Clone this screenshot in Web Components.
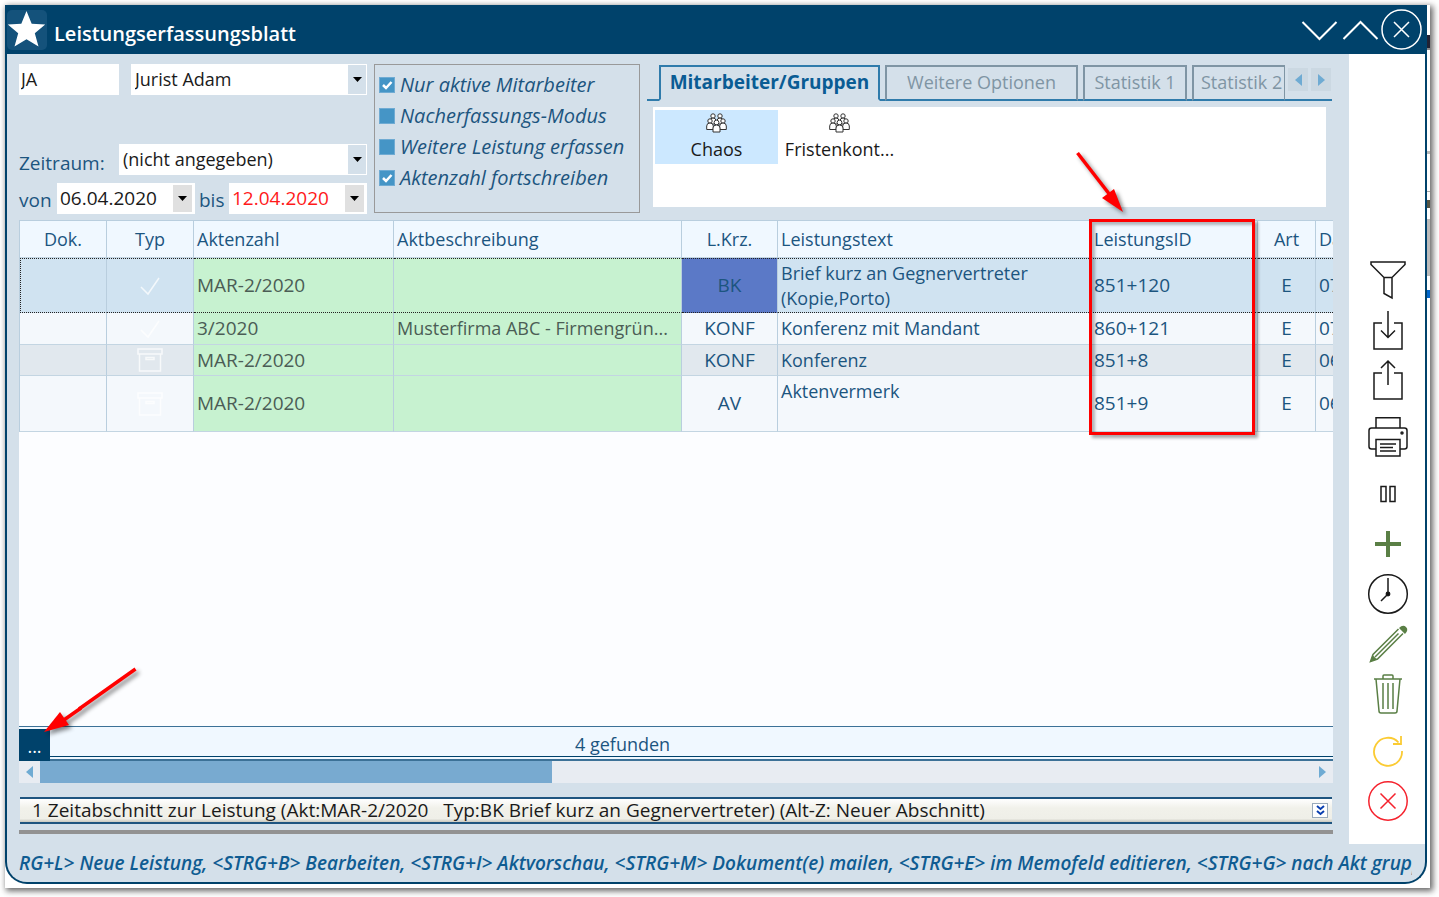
<!DOCTYPE html>
<html lang="de">
<head>
<meta charset="utf-8">
<title>Leistungserfassungsblatt</title>
<style>
  html, body { margin: 0; }
  body {
    --navy: #00426b; --pane: #d4e0ea; --ink: #1c557f; --line: #b9cede; --sky: #78aad0;
    display: flex; flex-direction: column; min-height: 100vh; box-sizing: border-box;
    padding: 5px 9px 9px 5px; background: #fff;
    font: 18px/25px "Open Sans", "Noto Sans", sans-serif; color: var(--ink);
  }
</style>
</head>
<body>
<app-window>
  <title-bar slot="title">Leistungserfassungsblatt</title-bar>
  <filter-form slot="top"></filter-form>
  <option-group slot="top">
    <check-option checked label="Nur aktive Mitarbeiter"></check-option>
    <check-option label="Nacherfassungs-Modus"></check-option>
    <check-option label="Weitere Leistung erfassen"></check-option>
    <check-option checked label="Aktenzahl fortschreiben"></check-option>
  </option-group>
  <tab-panel slot="top">
    <group-item selected>Chaos</group-item>
    <group-item>Fristenkont...</group-item>
  </tab-panel>
  <service-table slot="main"></service-table>
  <status-row slot="main">4 gefunden</status-row>
  <scroll-strip slot="main"></scroll-strip>
  <section-bar slot="main">1 Zeitabschnitt zur Leistung (Akt:MAR-2/2020 &nbsp; Typ:BK Brief kurz an Gegnervertreter) (Alt-Z: Neuer Abschnitt)</section-bar>
  <tool-rail slot="rail"></tool-rail>
  <hint-line slot="hints">RG+L&gt; Neue Leistung, &lt;STRG+B&gt; Bearbeiten, &lt;STRG+I&gt; Aktvorschau, &lt;STRG+M&gt; Dokument(e) mailen, &lt;STRG+E&gt; im Memofeld editieren, &lt;STRG+G&gt; nach Akt gruppie</hint-line>
</app-window>

<script>
const define = (name, html, setup) => {
  const tpl = document.createElement('template');
  tpl.innerHTML = '<style>:host,*{box-sizing:border-box}button,input,select{font:inherit;color:inherit;margin:0;padding:0;border:0;border-radius:0;background:none}svg{display:block}</style>' + html;
  customElements.define(name, class extends HTMLElement {
    constructor() {
      super();
      this.attachShadow({ mode: 'open' }).append(tpl.content.cloneNode(true));
    }
    connectedCallback() { if (setup) setup(this, this.shadowRoot); }
  });
};

define('app-window', `
<style>
  :host { flex: 1; display: flex; background: #fff; box-shadow: 2px 2px 6px 1px #0009; padding: 0 3px 4px 0; position: relative; }
  .behind { position: absolute; right: 0; top: 0; bottom: 0; width: 3px;
    background: linear-gradient(#fff 30px, #223 30px 43px, #888 43px 45px, #fff 45px 146px, #bbb 146px 149px, #fff 149px 186px, #aaa 186px 187px, #fff 187px 195px, #554 195px 203px, #fff 203px 214px, #bbb 214px 271px, #fff 271px 285px, #06c 285px 293px, #fff 293px); }
  .win { flex: 1; min-width: 0; display: flex; flex-direction: column; background: var(--pane);
    border: 2px solid var(--navy); border-top: 0; border-radius: 0 0 22px 22px; overflow: hidden; position: relative; }
  .mid { flex: 1; display: flex; }
  main { flex: 1; min-width: 0; display: flex; flex-direction: column; padding: 10px 16px 10px 12px; }
  .top { display: flex; gap: 7px; height: 156px; align-items: flex-start; }
</style>
<div class="behind"></div>
<div class="win">
  <slot name="title"></slot>
  <div class="mid">
    <main><div class="top"><slot name="top"></slot></div><slot name="main"></slot></main>
    <slot name="rail"></slot>
  </div>
  <slot name="hints"></slot>
</div>`);

define('title-bar', `
<style>
  :host { display: flex; align-items: center; height: 49px; background: var(--navy); color: #fff; padding-right: 3px; }
  .logo { width: 40px; height: 40px; border-radius: 5px; background: #14527b; }
  h1 { flex: 1; margin: 0; padding: 8px 0 0 7px; font-size: 20px; line-height: 25px; font-weight: 600; }
  button { height: 41px; display: grid; place-items: center; }
  svg { fill: none; stroke: #fff; stroke-width: 2; }
  .logo svg { fill: #fff; stroke: none; }
</style>
<span class="logo"><svg width="40" height="40" viewBox="0 0 40 40"><path d="M19.500 1l5.200 12.700 13.500.8-10.400 8.800 3.700 13.200-12-7.300-12 7.300 3.700-13.200L.8 14.500l13.500-.8z"/></svg></span>
<h1><slot></slot></h1>
<button aria-label="Minimieren"><svg width="41" height="41"><path d="M3.500 13L20.500 30 37.500 13"/></svg></button>
<button aria-label="Maximieren"><svg width="41" height="41"><path d="M3.500 30L20.500 13 37.500 30"/></svg></button>
<button aria-label="Schließen"><svg width="41" height="41"><circle cx="20.500" cy="20.500" r="19.500" stroke-width="1.500"/><path d="M13 13l15 15M28 13L13 28" stroke-width="1.500"/></svg></button>`);

define('filter-form', `
<style>
  :host { display: block; width: 348px; flex: none; }
  form { display: flex; flex-direction: column; }
  .row { display: flex; height: 31px; }
  .row + .row { margin-top: 49px; }
  .row + .dates { margin-top: 8px; font-size: 19px; }
  label { padding-top: 7px; line-height: 25px; font-size: 19px; }
  .id { width: 100px; margin-right: 12px; background: #fff; color: #1a1a1a; padding: 0 2px; }
  .period { width: 100px; }
</style>
<form>
  <div class="row"><input class="id" value="JA" aria-label="Kürzel"><combo-field name="Mitarbeiter" value="Jurist Adam"></combo-field></div>
  <div class="row"><label class="period">Zeitraum:</label><combo-field name="Zeitraum" value="(nicht angegeben)"></combo-field></div>
  <div class="row dates"><date-field label="von" value="06.04.2020"></date-field><date-field label="bis" value="12.04.2020" class="end" style="--date-ink:#ff1a1a"></date-field></div>
</form>`);

define('combo-field', `
<style>
  :host { display: flex; flex: 1; position: relative; background: #fff; color: #1a1a1a; }
  select { appearance: none; width: 100%; height: 31px; padding: 0 22px 0 4px; outline: 0; }
  span { position: absolute; right: 1px; top: 1px; bottom: 1px; width: 18px; background: var(--pane); display: grid; place-items: center; pointer-events: none; }
</style>
<select></select><span><svg width="9" height="5"><path d="M0 0h9L4.500 5z"/></svg></span>`,
(el, root) => {
  const s = root.querySelector('select');
  s.setAttribute('aria-label', el.getAttribute('name'));
  s.add(new Option(el.getAttribute('value')));
});

define('date-field', `
<style>
  :host { display: flex; }
  :host(.end) { margin-left: 4px; }
  label { width: 38px; padding-top: 5px; }
  :host(.end) label { width: 30px; }
  div { display: flex; width: 138px; height: 31px; background: #fff; padding: 2px 3px 2px 3px; color: var(--date-ink, #1a1a1a); }
  input { flex: 1; min-width: 0; }
  button { width: 19px; background: #e0e0e0; color: #000; display: grid; place-items: center; }
</style>
<label for="d"></label><div><input id="d"><button type="button" aria-label="Kalender"><svg width="9" height="5"><path d="M0 0h9L4.500 5z"/></svg></button></div>`,
(el, root) => {
  root.querySelector('label').textContent = el.getAttribute('label');
  root.querySelector('input').value = el.getAttribute('value');
});

define('option-group', `
<style>
  :host { display: block; flex: none; width: 266px; height: 149px; border: 1px solid #999; padding: 4px 0 0 4px; }
</style><slot></slot>`);

define('check-option', `
<style>
  :host { display: block; height: 31px; font-style: italic; font-size: 20px; }
  label { display: flex; align-items: center; gap: 5px; height: 31px; white-space: nowrap; }
  input { appearance: none; width: 16px; height: 16px; background: #4595c6; border: 1px solid #6fabd3; }
  .box { position: relative; display: grid; }
  svg { position: absolute; left: 3px; top: 4px; fill: none; stroke: #fff; stroke-width: 2.500; display: none; pointer-events: none; }
  input:checked + svg { display: block; }
</style>
<label><span class="box"><input type="checkbox"><svg width="11" height="9"><path d="M1 4l3 3 5.500-6"/></svg></span><span class="text"></span></label>`,
(el, root) => {
  root.querySelector('.text').textContent = el.getAttribute('label');
  root.querySelector('input').checked = el.hasAttribute('checked');
});

define('tab-panel', `
<style>
  :host { display: block; flex: 1; min-width: 0; }
  .tabs { display: flex; height: 37px; padding: 1px 0 0 12px; background: linear-gradient(#2f7bab, #2f7bab) 0 100% / 100% 2px no-repeat; margin-right: 1px; }
  .tabs button { flex: none; height: 36px; border: 1px solid #7f95a4; border-width: 2px 2px 0; color: #7f95a4; margin-right: 5px; text-align: center; white-space: nowrap; overflow: hidden; padding-bottom: 2px; border-bottom: 2px solid #2f7bab; }
  .tabs button.on { border-color: #2f7bab; border-bottom-color: var(--pane); color: #0a5c94; font-weight: 700; font-size: 19px; }
  .a { width: 221px; } .b { width: 193px; } .c { width: 104px; } .d { width: 93px; }
  .tabs .d { text-align: left; padding-left: 7px; margin-right: 3px; border-right-width: 1px; }
  .tabs .nav { width: 20px; height: 23px; margin: 3px 3px 0 0; padding: 0; border: 0; background: #cbd8e2; display: grid; place-items: center; }
  svg { fill: #6fabd3; }
  .panel { display: flex; align-items: flex-start; height: 100px; background: #fff; margin: 6px 7px 0 6px; padding: 3px 2px; }
</style>
<div class="tabs" role="tablist">
  <button class="a on" role="tab">Mitarbeiter/Gruppen</button><button class="b" role="tab">Weitere Optionen</button><button class="c" role="tab">Statistik 1</button><button class="d" role="tab">Statistik 2</button><button class="nav" aria-label="Zurück"><svg width="7" height="12"><path d="M7 0v12L0 6z"/></svg></button><button class="nav" aria-label="Weiter"><svg width="7" height="12"><path d="M0 0v12l7-6z"/></svg></button>
</div>
<div class="panel"><slot></slot></div>`);

define('group-item', `
<style>
  :host { display: flex; flex-direction: column; align-items: center; width: 123px; height: 54px; padding-top: 3px; color: #1a1a1a; white-space: nowrap; }
  :host([selected]) { background: #cce8ff; }
  svg { fill: #fff; stroke: #333; stroke-width: 1; margin-bottom: 4px; }
  div { line-height: 25px; }
</style>
<svg width="21" height="20" viewBox="0 0 21 20"><g><circle cx="7" cy="3" r="2.200"/><path d="M4 11V8q0-3 3-3t3 3v3z"/><circle cx="14" cy="3" r="2.200"/><path d="M11 11V8q0-3 3-3t3 3v3z"/><circle cx="4" cy="8" r="2.200"/><path d="M.7 16.500V13q0-3 3.300-3t3.300 3v3.500z"/><circle cx="17" cy="8" r="2.200"/><path d="M13.700 16.500V13q0-3 3.300-3t3.300 3v3.500z"/><circle cx="10.500" cy="9.500" r="2.400"/><path d="M7 19v-4q0-3 3.500-3t3.500 3v4z"/></g></svg>
<div><slot></slot></div>`);

const tick = '<svg width="22" height="20"><path d="M2 11l7 7L20 2"/></svg>';
const box = '<svg width="26" height="24"><path d="M1 1h24v5H1zM2.500 6h21v17h-21zM9 9.500h8v2H9z"/></svg>';
const rows = [
  ['sel', tick, 'MAR-2/2020', '', 'BK', 'Brief kurz an Gegnervertreter (Kopie,Porto)', '851+120', 'E', '07.04.2020'],
  ['', tick, '3/2020', 'Musterfirma ABC - Firmengrün...', 'KONF', 'Konferenz mit Mandant', '860+121', 'E', '07.04.2020'],
  ['alt', box, 'MAR-2/2020', '', 'KONF', 'Konferenz', '851+8', 'E', '06.04.2020'],
  ['tall', box, 'MAR-2/2020', '', 'AV', 'Aktenvermerk', '851+9', 'E', '06.04.2020'],
];
define('service-table', `
<style>
  :host { display: block; flex: 1; position: relative; background: #fcfdff; min-height: 300px; }
  .clip { overflow: hidden; }
  table { table-layout: fixed; width: 100%; border-collapse: separate; border-spacing: 0; border-left: 1px solid var(--line); }
  th, td { height: 32px; padding: 0 3px; border-right: 1px solid var(--line); border-bottom: 1px solid #c3d5e2; font-weight: 400; text-align: left; white-space: nowrap; overflow: hidden; background: #f4f8fc; }
  th { height: 38px; background: #f0f8ff; border-top: 1px solid var(--line); }
  tr > :last-child { border-right: 0; }
  .c { text-align: center; }
  .n { font-size: 19px; }
  .g { background: #c7f2d0; color: #4b5d55; text-overflow: ellipsis; }
  .alt td { height: 31px; }
  .alt td:not(.g) { background: #e1e8ee; }
  .sel td { height: 55px; border-top: 1px dotted #222; border-bottom: 1px dotted #222; }
  .sel td:not(.g) { background: #d0e3f1; }
  .sel td.k { background: #5b79c7; }
  .sel td:first-child { border-left: 1px dotted #222; }
  .t { white-space: normal; }
  .tall td { height: 56px; }
  .tall .t { vertical-align: top; padding-top: 3px; }
  td svg { margin: auto; fill: none; stroke: #fff; stroke-width: 1.500; opacity: .75; }
  .mark { position: absolute; left: 1070px; top: -1px; width: 166px; height: 216px; border: 3px solid #f00; box-shadow: 3px 3px 3px #0005, inset 3px 3px 3px #0004; pointer-events: none; }
  .arrow { position: absolute; left: 1050px; top: -75px; filter: drop-shadow(3px 3px 2px #0007); pointer-events: none; }
</style>
<div class="clip"><table>
<colgroup><col style="width:87px"><col style="width:87px"><col style="width:200px"><col style="width:288px"><col style="width:96px"><col style="width:313px"><col style="width:167px"><col style="width:58px"><col></colgroup>
<thead><tr><th class="c">Dok.</th><th class="c">Typ</th><th>Aktenzahl</th><th>Aktbeschreibung</th><th class="c">L.Krz.</th><th>Leistungstext</th><th>LeistungsID</th><th class="c">Art</th><th>Datum</th></tr></thead>
<tbody>${rows.map(r => `<tr class="${r[0]}"><td></td><td class="c">${r[1]}</td><td class="g n">${r[2]}</td><td class="g">${r[3]}</td><td class="c k n">${r[4]}</td><td class="t">${r[5]}</td><td class="n">${r[6]}</td><td class="c n">${r[7]}</td><td class="n">${r[8]}</td></tr>`).join('')}</tbody>
</table></div>
<div class="mark"></div>
<svg class="arrow" width="60" height="70"><path d="M8.500 8L41 50" stroke="#f00" stroke-width="3.500"/><path d="M54 67L33 53l12-9z" fill="#f00"/></svg>`);

define('status-row', `
<style>
  :host { display: flex; position: relative; height: 35px; background: #f0f8ff; border-top: 1px solid #3c7197; border-bottom: 2px solid #3c7197; }
  button { width: 31px; height: 32px; margin-top: 2px; background: var(--navy); color: #fff; padding-top: 3px; line-height: 25px; }
  div { flex: 1; margin-bottom: 2px; border-bottom: 1px solid var(--navy); padding: 5px 0 0 525px; line-height: 25px; }
  svg { position: absolute; left: 22px; bottom: 26px; filter: drop-shadow(3px 3px 2px #0007); pointer-events: none; }
</style>
<button aria-label="Menü">...</button><div><slot></slot></div>
<svg width="100" height="70"><path d="M94.500 6L38 46" stroke="#f00" stroke-width="3.500"/><path d="M3 69L19 49l9 13z" fill="#f00"/><path d="M40 45L20 59" stroke="#f00" stroke-width="3.500"/></svg>`);

define('scroll-strip', `
<style>
  :host { display: flex; height: 22px; background: #e8ecf2; align-items: center; }
  button { width: 21px; height: 22px; display: grid; place-items: center; }
  .thumb { width: 39%; height: 22px; background: var(--sky); margin-right: auto; }
  svg { fill: #6fabd3; }
</style>
<button aria-label="Nach links"><svg width="7" height="12"><path d="M7 0v12L0 6z"/></svg></button><div class="thumb"></div><button aria-label="Nach rechts"><svg width="7" height="12"><path d="M0 0v12l7-6z"/></svg></button>`);

define('section-bar', `
<style>
  :host { display: block; margin-top: 14px; padding-bottom: 6px; border-bottom: 4px solid #929292; color: #1a1a1a; font-size: 19px; }
  .bar { display: flex; align-items: center; height: 27px; margin: 0 1px; padding: 0 4px 0 12px; border-top: 2px solid #1f5580; border-bottom: 2px solid #1f5580; background: linear-gradient(#fff, #f1f1ea 40%, #efefe8 85%, #c9c9c0); white-space: nowrap; }
  .txt { flex: 1; min-width: 0; overflow: hidden; line-height: 23px; }
  button { width: 16px; height: 15px; background: #fff; border: 1px solid #9ab; display: grid; place-items: center; }
  svg { fill: none; stroke: #0a3fb0; stroke-width: 2; }
</style>
<div class="bar"><div class="txt"><slot></slot></div><button aria-label="Aufklappen"><svg width="9" height="11"><path d="M1 1l3.500 3L8 1M1 6l3.500 3L8 6"/></svg></button></div>`);

define('hint-line', `
<style>
  :host { display: block; height: 38px; padding: 7px 13px 0 12px; color: #0f5c92; font-size: 19px; font-weight: 600; font-style: italic; white-space: nowrap; }
  div { overflow: hidden; line-height: 25px; }
</style><div><slot></slot></div>`);

const icons = [
  [['Filtern', '<path d="M3 2h34v2.500L24 17.500v20.500l-8-4.500V17.500L3 4.500zM16 17.500h8"/>', 'k'],
   ['Importieren', '<path d="M14 13H6v26h28V13h-8M20 1v26M13 20.500l7 7 7-7"/>', 'k'],
   ['Exportieren', '<path d="M14 13H6v26h28V13h-8M20 25V1M13 8l7-7 7 7"/>', 'k']],
  [['Drucken', '<path d="M8 11V.8h24V11M8 32H3.500Q1 32 1 29.500v-16Q1 11 3.500 11h33q2.500 0 2.500 2.500v16Q39 32 36.500 32H32M8 22.500h24V39H8zM12 27h16M12 30.500h13M12 34h16"/><circle cx="34" cy="16" r="1"/>', 'k']],
  [['Pause', '<path d="M13 12.500h5v15h-5zM22 12.500h5v15h-5z"/>', 'k'],
   ['Neu', '<path d="M20 7v26M7 20h26" stroke-width="4"/>', 'g'],
   ['Zeit', '<circle cx="20" cy="20" r="19.300"/><path d="M20 4v16l-7 7"/><circle cx="20" cy="20" r="1.700" fill="#111"/>', 'k'],
   ['Bearbeiten', '<path d="M30.500 5L5 30.500 2.500 37.500 9.500 35 35 9.500M30.500 9.500L7 33"/><path d="M31 4q4-4 7-1t-1 7zM2.500 37.500l2-6.500 4.500 4.500z" fill="#5a7f45" stroke="none"/>', 'g'],
   ['Löschen', '<path d="M6 5h28M8 5l3 32q0 2 2 2h14q2 0 2-2l3-32M15 5V2q0-1 1-1h8q1 0 1 1v3M15 9v26M20 9v26M25 9v26"/>', 'g']],
  [['Aktualisieren', '<path d="M34 20A14 14 0 1 1 30.500 11.500M33 5v8h-8"/>', 'y'],
   ['Abbrechen', '<circle cx="20" cy="20" r="19.200"/><path d="M12.500 12.500l15 15M27.500 12.500l-15 15"/>', 'r']],
];
define('tool-rail', `
<style>
  :host { display: flex; flex: none; flex-direction: column; justify-content: flex-end; gap: 17px; width: 76px; padding: 0 0 23px 19px; background: #fff; }
  div { display: flex; flex-direction: column; gap: 10px; }
  button { width: 40px; height: 40px; }
  svg { fill: none; stroke-width: 1.500; overflow: visible; }
  .k { stroke: #1a1a1a; } .g { stroke: #5a7f45; } .y { stroke: #fbcb33; stroke-width: 1.800; } .r { stroke: #f5222d; }
</style>
${icons.map(g => `<div>${g.map(i => `<button aria-label="${i[0]}"><svg class="${i[2]}" width="40" height="40">${i[1]}</svg></button>`).join('')}</div>`).join('')}`);
</script>
</body>
</html>
